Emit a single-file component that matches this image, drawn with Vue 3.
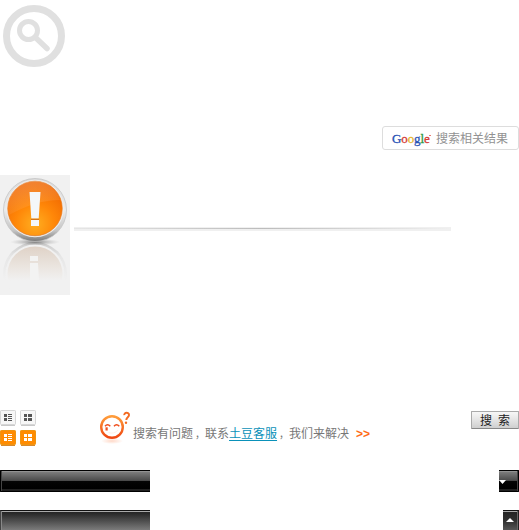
<script setup>
const views = ['list', 'grid', 'list', 'grid']
</script>

<template>
  <main class="page">
    <svg class="magnifier" viewBox="0 0 62 62">
      <circle cx="31" cy="31" r="27.5" fill="none" stroke="#e0e0e0" stroke-width="7" />
      <circle cx="25.5" cy="25.5" r="9" fill="none" stroke="#e0e0e0" stroke-width="5" />
      <path d="M33 33 44 43.5" stroke="#e0e0e0" stroke-width="5.5" stroke-linecap="round" />
    </svg>

    <button class="google-button">
      <span class="google"><b class="blue">G</b><b class="red">o</b><b class="yellow">o</b><b class="blue">g</b><b class="green">l</b><b class="red">e</b></span><i class="tm"></i>
      <span class="google-label">搜索相关结果</span>
    </button>

    <section class="notice">
      <svg class="warning" viewBox="0 0 70 120">
        <defs>
          <radialGradient id="orange" cx=".5" cy=".78" r=".75">
            <stop offset="0" stop-color="#ffae20" />
            <stop offset=".48" stop-color="#ff8708" />
            <stop offset="1" stop-color="#ef6500" />
          </radialGradient>
          <linearGradient id="rim" x2="0" y2="1">
            <stop offset="0" stop-color="#d8d8d8" />
            <stop offset=".5" stop-color="#ececec" />
            <stop offset=".83" stop-color="#c4c4c4" />
            <stop offset="1" stop-color="#777777" />
          </linearGradient>
          <linearGradient id="gloss" x2=".3" y2="1">
            <stop offset="0" stop-color="#fff" stop-opacity=".22" />
            <stop offset="1" stop-color="#fff" stop-opacity=".04" />
          </linearGradient>
          <linearGradient id="mirror" x2="0" y2="1">
            <stop offset="0" stop-color="#c9c9c9" />
            <stop offset=".22" stop-color="#e6e6e6" />
            <stop offset=".6" stop-color="#f1f1f1" />
          </linearGradient>
          <linearGradient id="mirrorInner" x2="0" y2="1">
            <stop offset="0" stop-color="#dfd2c7" />
            <stop offset=".35" stop-color="#eae4de" />
            <stop offset=".62" stop-color="#f1f1f1" />
          </linearGradient>
          <radialGradient id="shadow">
            <stop offset="0" stop-color="#666" stop-opacity=".8" />
            <stop offset="1" stop-color="#aaa" stop-opacity="0" />
          </radialGradient>
        </defs>
        <rect width="70" height="120" fill="#f1f1f1" />
        <circle cx="35" cy="99" r="32" fill="url(#mirror)" />
        <circle cx="35" cy="99" r="29.5" fill="#f1f1f1" />
        <circle cx="35" cy="99" r="27.5" fill="url(#mirrorInner)" />
        <path d="M30 81h8v5h-8zM30 88h8l1 17h-9z" fill="#f3f3f2" />
        <ellipse cx="35" cy="67" rx="25" ry="3.5" fill="url(#shadow)" />
        <circle cx="35" cy="35" r="31.5" fill="url(#rim)" stroke="#c0c0c0" stroke-width=".7" />
        <circle cx="35" cy="33.5" r="28" fill="none" stroke="#ededed" stroke-width="1.5" />
        <circle cx="35" cy="33.5" r="27.3" fill="url(#orange)" stroke="#e87a21" stroke-width=".6" />
        <path d="M9 40A26 26 0 0 1 60 25Q36 25 9 40Z" fill="url(#gloss)" />
        <path d="M29.5 17h11l-1.8 26.5h-7.4zM31 45h8v6h-8z" fill="#f4f7f9" />
        <path d="M31 44.3h8" stroke="#ca6a19" stroke-width="1" />
      </svg>
      <div class="divider"></div>
    </section>

    <section class="tools">
      <div class="views">
        <svg v-for="(view, i) in views" :key="i" class="view" :class="{ active: i > 1 }" viewBox="0 0 16 16">
          <rect class="tile" x=".5" y=".5" width="15" height="14" rx=".7" />
          <path class="base" d="M1 15.5h14" />
          <path v-if="view === 'list'" class="mark" d="M4 4h3v3H4zM4 8h3v3H4zM8 4h4v1H8zM8 6h4v1H8zM8 8h4v1H8zM8 10h4v1H8z" />
          <path v-else class="mark" d="M4 4h3v3H4zM8 4h4v3H8zM4 8h3v3H4zM8 8h4v3H8z" />
        </svg>
      </div>
      <svg class="face" viewBox="0 0 32 34">
        <defs>
          <linearGradient id="face-line" x2="0" y2="1">
            <stop offset="0" stop-color="#ff9d3b" />
            <stop offset="1" stop-color="#ef4712" />
          </linearGradient>
          <radialGradient id="face-shadow">
            <stop offset="0" stop-color="#ffd9c8" />
            <stop offset="1" stop-color="#fff" />
          </radialGradient>
        </defs>
        <ellipse cx="13" cy="31" rx="11" ry="3" fill="url(#face-shadow)" />
        <circle cx="13" cy="17" r="10.8" fill="#fff" stroke="url(#face-line)" stroke-width="2.4" />
        <path d="M6 16.3Q8.5 13.3 11.3 16.3M15 16.3Q17.5 13.3 20.3 16.3" fill="none" stroke="#ef4e1c" stroke-width="1.5" />
        <path d="M6.5 17.3h2.2V20.5H6.5z" fill="#ef4e1c" />
        <path d="M9.5 22.5Q15 24.5 19 20" fill="none" stroke="#fff0e8" stroke-width="1" />
        <path d="M25.3 5.2C25 2 30 2 30 5 30 7.3 27.3 7.2 27.3 10" fill="none" stroke="#f36b22" stroke-width="2" />
        <circle cx="27" cy="12.7" r="1.2" fill="#f36b22" />
      </svg>
      <p class="help">搜索有问题<span class="comma">，</span>联系<a>土豆客服</a><span class="comma">，</span>我们来解决<b class="more">&gt;&gt;</b></p>
      <button class="search"><span>搜</span><span>索</span></button>
    </section>

    <section class="bar dark">
      <div class="track"></div>
      <div class="toggle"><svg viewBox="0 0 7 4"><path d="M0 0h7L3.5 4z" fill="#fff" /></svg></div>
    </section>
    <section class="bar gray">
      <div class="track"></div>
      <div class="toggle"><svg viewBox="0 0 8 4"><path d="M0 4h8L4 0z" fill="#fff" /></svg></div>
    </section>
  </main>
</template>

<style>
body { margin: 0; background: #fff; overflow: hidden; }
</style>

<style scoped>
* { box-sizing: border-box; }
.page {
  width: 519px;
  height: 530px;
  display: flex;
  flex-direction: column;
  overflow: hidden;
  font: 12px/16px "Liberation Sans", "Noto Sans CJK SC", sans-serif;
}
svg { display: block; flex: none; }
button { font: inherit; padding: 0; }
.magnifier { width: 62px; height: 62px; margin: 5px 0 0 3px; }
.google-button {
  width: 137px;
  height: 24px;
  margin-top: 59px;
  align-self: flex-end;
  display: flex;
  align-items: center;
  padding-left: 9px;
  border: 1px solid #ddd;
  border-radius: 3px;
  background: #fff;
  color: #929292;
}
.google { width: 37px; padding-top: 1px; font: 13px/18px "Liberation Serif", serif; letter-spacing: -.1px; white-space: nowrap; }
.google b { font-weight: 400; -webkit-text-stroke: .3px currentColor; }
.blue { color: #2853b5; }
.red { color: #d53b35; }
.yellow { color: #e5b52b; }
.green { color: #2b9a45; }
.tm { width: 2px; height: 1px; margin: -5px 5px 0 0; background: #e77c70; }
.google-label { padding-top: 2px; white-space: nowrap; }
.notice { height: 120px; margin-top: 25px; display: flex; }
.warning { width: 70px; height: 120px; }
.divider {
  width: 377px;
  height: 4px;
  margin: 52px 0 0 4px;
  background: linear-gradient(90deg, #e6e6e6, #bcbcbc 50%, #f0f0f0) 0 1px / 100% 1px no-repeat, #f0f0f0;
}
.tools { height: 36px; margin-top: 115px; display: flex; }
.views { width: 36px; display: grid; grid-template-columns: 16px 16px; grid-template-rows: 16px 16px; gap: 4px; }
.view { width: 16px; height: 16px; }
.tile { fill: #f7f7f7; stroke: #d6d6d6; }
.base { stroke: #c9c9c9; }
.mark { fill: #555; shape-rendering: crispEdges; }
.active .tile { fill: #ff8b00; stroke: #ee9511; }
.active .base { stroke: #d9882b; }
.active .mark { fill: #fff; }
.face { width: 32px; height: 34px; margin-left: 63px; }
.help { margin: 15px 0 0 2px; color: #777; white-space: nowrap; font-family: "Noto Sans CJK SC", sans-serif; }
.comma { margin-left: 2px; font-size: 10px; line-height: 1; }
.help a { color: #0a91b9; text-decoration: underline; text-underline-offset: 2px; text-decoration-thickness: 1px; }
.more { margin-left: 7px; color: #ff6d16; font: bold 12px/16px "Liberation Sans", sans-serif; }
.search {
  width: 48px;
  height: 18px;
  margin: 1px 0 0 auto;
  padding-top: 1px;
  display: flex;
  gap: 6px;
  justify-content: center;
  align-items: center;
  border: 1px solid #aaa;
  border-bottom-color: #888;
  border-radius: 1px;
  background: linear-gradient(#f7f7f7, #e4e4e4 50%, #cfcfcf);
  color: #222;
}
.bar { display: flex; justify-content: space-between; flex: none; }
.track { width: 150px; }
.toggle { display: flex; }
.dark { height: 22px; margin-top: 24px; }
.dark .track, .dark .toggle {
  border: 1px solid #000;
  background: linear-gradient(#929292 0 1px, #7c7c7c 1px, #484848 10px, #050505 10px, #000 18px, #202020 18px);
}
.dark .track { border-right: 0; border-radius: 1px 0 0 1px; box-shadow: inset 1px 0 #444; }
.dark .toggle { width: 20px; border-left: 0; border-radius: 0 1px 1px 0; box-shadow: inset -1px 0 #444; }
.dark svg { width: 7px; height: 4px; margin-top: 9px; }
.gray { height: 20px; margin-top: 18px; }
.gray .track, .gray .toggle { border-top: 1px solid #111; background: linear-gradient(#aaa 0 1px, #242424 1px, #353535 5px, #7b7b7b); }
.gray .track { border-left: 1px solid #444; box-shadow: inset 1px 0 #888; }
.gray .toggle { width: 16px; border-right: 1px solid #222; background: linear-gradient(#aaa 0 1px, #242424 1px, #303030 10px, #555); box-shadow: inset -1px 0 #666; }
.gray svg { width: 8px; height: 4px; margin: 7px 0 0 3px; }
</style>
